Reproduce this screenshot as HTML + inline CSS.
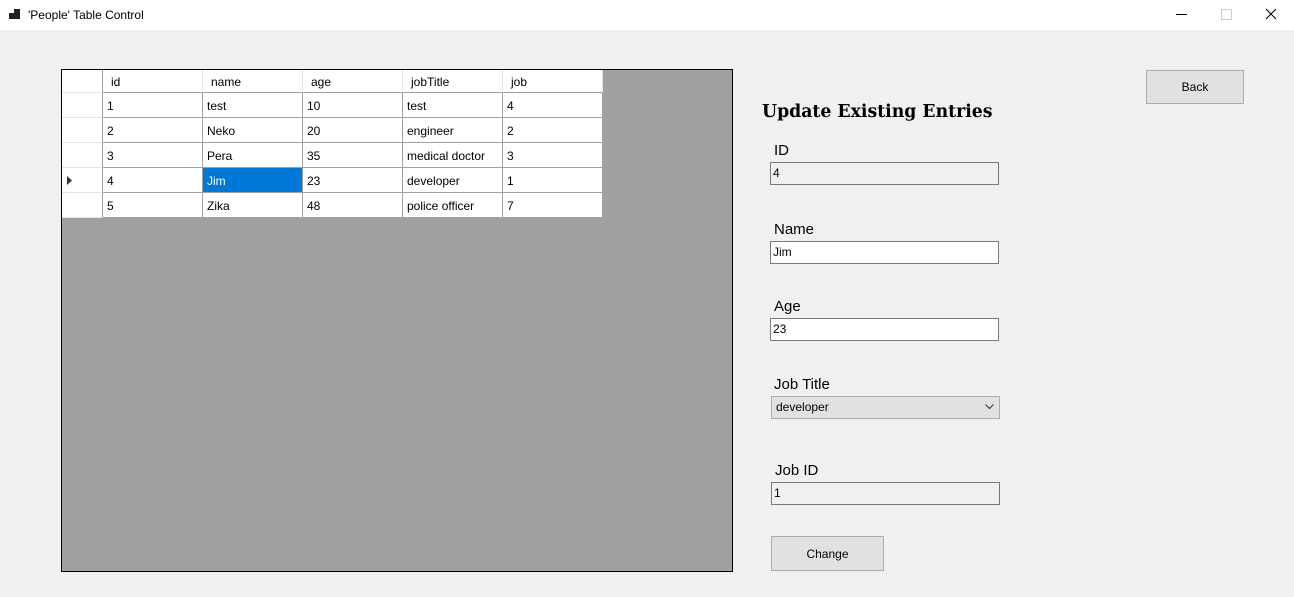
<!DOCTYPE html>
<html><head><style>
body{margin:0;width:1294px;height:597px;background:#f0f0f0;font-family:"Liberation Sans",sans-serif;font-size:12px;position:relative;overflow:hidden;color:#000}
.a{position:absolute}
.title{left:0;top:0;width:1294px;height:30px;background:#fff}
.grid{left:61px;top:69px;width:670px;height:501px;border:1px solid #000;background:#a0a0a0}
.c{position:absolute;height:24px;line-height:27px;box-sizing:border-box;padding-left:4px;background:#fff;border-right:1px solid #a0a0a0;border-bottom:1px solid #a0a0a0}
.h{height:23px;line-height:25px;padding-left:8px;border-right:1px solid #e4e4e4;border-bottom:1px solid #a0a0a0}
.rh{border-right:1px solid #a0a0a0;border-bottom:1px solid #e4e4e4}
.lbl{font-size:15px}
.tb{position:absolute;box-sizing:border-box;height:23px;border:1px solid #7a7a7a;background:#fff;font-size:12px;line-height:21px;padding-left:2px}
.btn{position:absolute;box-sizing:border-box;border:1px solid #adadad;background:#e1e1e1;text-align:center;font-size:12px}
</style></head><body>
<div class="a title">
<svg class="a" style="left:9px;top:9px" width="12" height="11"><rect x="0" y="4" width="5" height="6" fill="#222"/><rect x="5" y="0" width="6" height="10" fill="#222"/></svg>
<div class="a" style="left:28px;top:8px;font-size:12px">'People' Table Control</div>
<div class="a" style="left:1176px;top:14px;width:11px;height:1px;background:#000"></div>
<div class="a" style="left:1221px;top:9px;width:9px;height:9px;border:1px solid #ccc"></div>
<svg class="a" style="left:1265px;top:8px" width="12" height="12"><path d="M1 1L11 11M11 1L1 11" stroke="#000" stroke-width="1"/></svg>
</div>
<div class="a grid">
<div class="c h rh" style="left:0;top:0;width:41px;border-right:1px solid #a0a0a0"></div>
<div class="c h" style="left:41px;top:0;width:100px">id</div>
<div class="c h" style="left:141px;top:0;width:100px">name</div>
<div class="c h" style="left:241px;top:0;width:100px">age</div>
<div class="c h" style="left:341px;top:0;width:100px">jobTitle</div>
<div class="c h" style="left:441px;top:0;width:100px">job</div>
</div>
<script>
var d=[["1","test","10","test","4"],["2","Neko","20","engineer","2"],["3","Pera","35","medical doctor","3"],["4","Jim","23","developer","1"],["5","Zika","48","police officer","7"]];
var g=document.querySelector('.grid'),h='';
d.forEach(function(r,i){var t=23+i*25;
h+='<div class="c rh" style="left:0;top:'+t+'px;width:41px;height:25px">'+(i==3?'<svg style="position:absolute;left:5px;top:8px" width="6" height="9"><path d="M0 0L5 4.5L0 9Z" fill="#333"/></svg>':'')+'</div>';
r.forEach(function(v,j){var sel=(i==3&&j==1);h+='<div class="c" style="left:'+(41+j*100)+'px;top:'+t+'px;width:100px;height:25px;'+(sel?'background:#0078d7;color:#fff;':'')+'">'+v+'</div>';});});
g.innerHTML+=h;
</script>
<div class="a" style="left:762px;top:102px;font-family:'DejaVu Serif','Liberation Serif',serif;font-weight:bold;font-size:17.3px">Update Existing Entries</div>
<div class="a lbl" style="left:774px;top:142px">ID</div>
<div class="tb" style="left:770px;top:162px;width:229px;background:#f0f0f0">4</div>
<div class="a lbl" style="left:774px;top:221px">Name</div>
<div class="tb" style="left:770px;top:241px;width:229px">Jim</div>
<div class="a lbl" style="left:774px;top:298px">Age</div>
<div class="tb" style="left:770px;top:318px;width:229px">23</div>
<div class="a lbl" style="left:774px;top:376px">Job Title</div>
<div class="tb" style="left:771px;top:396px;width:229px;background:#e1e1e1;border-color:#adadad;padding-left:4px">developer
<svg style="position:absolute;right:5px;top:7px" width="9" height="6"><path d="M0.5 0.5L4.5 4.5L8.5 0.5" stroke="#333" fill="none"/></svg></div>
<div class="a lbl" style="left:775px;top:462px">Job ID</div>
<div class="tb" style="left:771px;top:482px;width:229px;background:#f0f0f0">1</div>
<div class="btn" style="left:771px;top:536px;width:113px;height:35px;line-height:34px">Change</div>
<div class="btn" style="left:1146px;top:70px;width:98px;height:34px;line-height:33px">Back</div>
</body></html>
